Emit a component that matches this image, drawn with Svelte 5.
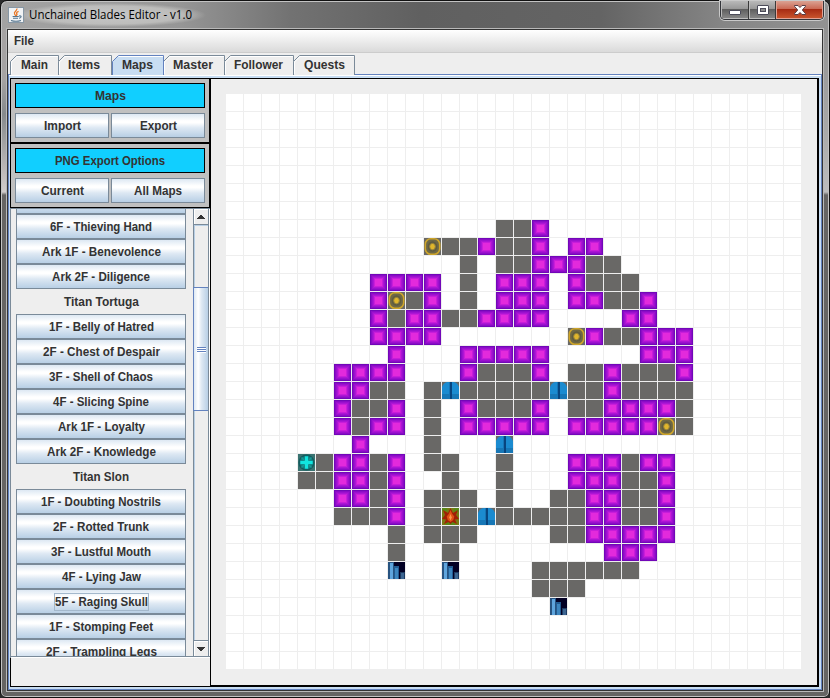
<script>
  const tabs = [
    { name: 'Main', w: 49, tw: 27, pad: 11 },
    { name: 'Items', w: 54, tw: 32, pad: 10 },
    { name: 'Maps', w: 53, tw: 31, pad: 11 },
    { name: 'Master', w: 62, tw: 40, pad: 10 },
    { name: 'Follower', w: 70, tw: 49, pad: 10 },
    { name: 'Quests', w: 62, tw: 41, pad: 11 },
  ];
  const active = 'Maps';

  const floors = [
    { name: '' },
    { name: '6F - Thieving Hand', tw: 102 },
    { name: 'Ark 1F - Benevolence', tw: 119 },
    { name: 'Ark 2F - Diligence', tw: 98 },
    { name: 'Titan Tortuga', tw: 75, label: true },
    { name: '1F - Belly of Hatred', tw: 105 },
    { name: '2F - Chest of Despair', tw: 117 },
    { name: '3F - Shell of Chaos', tw: 104 },
    { name: '4F - Slicing Spine', tw: 96 },
    { name: 'Ark 1F - Loyalty', tw: 87 },
    { name: 'Ark 2F - Knowledge', tw: 109 },
    { name: 'Titan Slon', tw: 56, label: true },
    { name: '1F - Doubting Nostrils', tw: 120 },
    { name: '2F - Rotted Trunk', tw: 96 },
    { name: '3F - Lustful Mouth', tw: 100 },
    { name: '4F - Lying Jaw', tw: 79 },
    { name: '5F - Raging Skull', tw: 93, focus: true },
    { name: '1F - Stomping Feet', tw: 104 },
    { name: '2F - Trampling Legs', tw: 111 },
  ];

  const left = 4;
  const top = 7;
  const rows = [
    '...........GGP........',
    '.......OGGPGGP.PP.....',
    '.........G.GGPPPGG....',
    '....PPPP.G.PPP.PGGG...',
    '....POGP.G.PPP.PPGGP..',
    '....PGPPGGPPPP....PP..',
    '....PPPP.......OPGGPPP',
    '.....P...PPPPP.....PPP',
    '..PPPP...PGGGP.GGPGGGP',
    '..PPGG.GDGGGGGDGGPGGGG',
    '..PGGP.G.PGGGP.GGPPPPG',
    '..PGPP.G.PPPPP.PPPPPOG',
    '...P...G...D..........',
    'CGPPGP.GG..G...PPPGPP.',
    'GGPPGP..G..G...PPPGGP.',
    '..PPGP.GGG.G..GGPPGGP.',
    '..GGGP.GFGDGGGGGPPGGP.',
    '.....G.GGG....GGPPPPP.',
    '.....G..G........PPP..',
    '.....S..S....GGGGGG...',
    '.............GGG......',
    '..............S.......',
  ];
  const cells = [];
  for (let r = 0; r < 32; r++) {
    for (let c = 0; c < 32; c++) {
      cells.push(rows[r - top]?.[c - left] ?? '.');
    }
  }
</script>

{#snippet fit(text, w)}
  <svg class="fit" width={w} height="16"><text x="0" y="12" textLength={w} lengthAdjust="spacingAndGlyphs">{text}</text></svg>
{/snippet}

<div class="window">
  <header>
    <div class="caption">
      <svg class="java" width="16" height="16" viewBox="0 0 16 16">
        <rect x=".5" y=".5" width="15" height="15" fill="#f1f3f5" stroke="#8797a5" />
        <path d="M8.9 1.5C9.4 4 5.3 4.7 6.6 7l1.2 2M10.6 4.3C8.7 5 8 5.9 9 7.2L8.3 9" fill="none" stroke="#e87524" stroke-width="1.3" />
        <path d="M4.6 9.5h6.2M5 11.2h5M3 13.4c3 1 7 1 10 0M11 9c3-.7 2.6 1.8 0 2.2" fill="none" stroke="#55758f" stroke-width="1.1" />
      </svg>
      <span class="title">{@render fit('Unchained Blades Editor - v1.0', 163)}</span>
    </div>
    <div class="controls">
      <div class="ctl min"><svg width="12" height="10"><rect x=".5" y="5.500" width="11" height="4" rx=".5" fill="#fff" stroke="#4b4b59" /></svg></div>
      <div class="ctl max"><svg width="12" height="10"><rect x=".5" y=".5" width="11" height="9" rx=".5" fill="#fff" stroke="#4b4b59" /><rect x="3.500" y="3.500" width="5" height="3" fill="#8d8d8d" stroke="#4b4b59" /></svg></div>
      <div class="ctl close"><svg width="12" height="10"><path d="M.5 .5H4l2 2 2-2h3.500v.8L8.300 5l3.200 3.700v.8H8l-2-2-2 2H.5v-.8L3.700 5 .5 1.300z" fill="#fff" stroke="#573c44" /></svg></div>
    </div>
  </header>

  <main>
    <nav class="menu">{@render fit('File', 20)}</nav>
    <div class="tabs">
      {#each tabs as t}
        <div class="tab" class:on={t.name === active} style:width="{t.w}px" style:padding-left="{t.pad}px">
          <svg class="edge" width={t.w} height="20">
            <path
              d={t.name === active ? `M1.500 20V6.500L7.500 .5H${t.w - 0.5}V20` : `M.5 20V6.500L6.500 .5H${t.w - 0.5}V20`}
              class="shape"
            />
            {#if t.name === active}
              <path d="M7.500 1.500H{t.w - 1}" class="shine" />
            {:else}
              <path d="M1.500 19V7L7 1.500H{t.w - 1}" class="shine" />
            {/if}
          </svg>
          <span>{@render fit(t.name, t.tw)}</span>
        </div>
      {/each}
    </div>

    <div class="page">
      <aside>
        <section class="panel">
          <div class="head">{@render fit('Maps', 31)}</div>
          <div class="pair">
            <div class="btn">{@render fit('Import', 37)}</div>
            <div class="btn">{@render fit('Export', 37)}</div>
          </div>
        </section>
        <section class="panel">
          <div class="head">{@render fit('PNG Export Options', 110)}</div>
          <div class="pair">
            <div class="btn">{@render fit('Current', 43)}</div>
            <div class="btn">{@render fit('All Maps', 48)}</div>
          </div>
        </section>
        <div class="scroll">
          <div class="view">
            <div class="list">
              {#each floors as f}
                <div class={f.label ? 'label' : 'btn'}>
                  {#if f.name}<span class:focus={f.focus}>{@render fit(f.name, f.tw)}</span>{/if}
                </div>
              {/each}
            </div>
          </div>
          <div class="bar">
            <div class="arrow up"><svg width="8" height="4" shape-rendering="crispEdges"><path d="M3 0h2v1h1v1h1v1h1v1H0V3h1V2h1V1h1z" fill="#333" /></svg></div>
            <div class="track"><div class="thumb"><i></i><i></i><i></i></div></div>
            <div class="arrow down"><svg width="8" height="4" shape-rendering="crispEdges"><path d="M0 0h8v1H7v1H6v1H5v1H3V3H2V2H1V1H0z" fill="#333" /></svg></div>
          </div>
        </div>
        <div class="rest"></div>
      </aside>
      <div class="canvas">
        <div class="grid">
          {#each cells as k}
            <div class="cell {k === '.' ? '' : k}">
              {#if k === 'O'}
                <svg viewBox="0 0 17 17"><rect width="17" height="17" fill="#696866" /><rect x="1.300" y=".8" width="14.400" height="15.400" rx="5.500" fill="#6e6845" stroke="#cfa62a" stroke-width="1.600" /><ellipse cx="8.500" cy="8.500" rx="4.800" ry="5.300" fill="#5f5b40" /><ellipse cx="8.500" cy="8.600" rx="2.800" ry="3.200" fill="#e0b62c" stroke="#9a8438" /></svg>
              {:else if k === 'D'}
                <svg viewBox="0 0 17 17"><rect width="17" height="17" fill="#696866" /><path d="M0 17V5Q2 0 6 0h5q4 0 6 5v12z" fill="#1b8bd0" /><path d="M0 12h17v5H0z" fill="#1777b6" /><path d="M8 0h2v17H8z" fill="#07457f" /><path d="M7 0h1v17H7z" fill="#1775b5" /></svg>
              {:else if k === 'S'}
                <svg viewBox="0 0 17 17"><path fill="#020024" d="M0 0h17v17H0z" /><path fill="#275380" d="M0 0h6v17H0z" /><path fill="#5fa5dd" d="M2 1h3v16H2z" /><path fill="#225b91" d="M6 4h5v13H6z" /><path fill="#3d86bf" d="M7 6h3v11H7z" /><path fill="#1c3961" d="M12 10h5v7h-5z" /><path fill="#3c6591" d="M13 11h3v6h-3z" /></svg>
              {:else if k === 'C'}
                <svg viewBox="0 0 17 17"><path fill="#397371" d="M0 0h17v17H0z" /><circle cx="8.500" cy="8.500" r="7.300" fill="#13807f" stroke="#145c5f" stroke-width="1.500" /><path d="M3.500 3.500l10 10M13.500 3.500l-10 10" stroke="#1a9894" stroke-width="1.500" /><path d="M6.500 2h4v4.500H15v4h-4.500V15h-4v-4.500H2v-4h4.500z" fill="#12e4df" stroke="#0e6568" stroke-width=".5" /></svg>
              {:else if k === 'F'}
                <svg viewBox="0 0 17 17"><path fill="#777a12" d="M0 0h17v17H0z" /><path fill="#588716" d="M0 0h5v3H0zM12 0h5v4h-5zM4 14h9v3H4z" /><path d="M8.500 0l2.500 5 5-3-2 5 3 4-4 .5 2 4.500-4.500-2-2 2-2-2-4.500 2 2-4.500-4-.5 3-4-2-5 5 3z" fill="#a02005" /><path d="M8.500 2l1.800 4 2 2.500-1 3.500-2.800 2-2.800-2-1-3.500 2-2.500z" fill="#df5014" /><path d="M8.500 6l1.300 3.500-1.300 3L7.200 9.500z" fill="#f9984a" /></svg>
              {/if}
            </div>
          {/each}
        </div>
      </div>
    </div>
  </main>
</div>

<style>
  :global(body) { margin: 0; background: #2b2b2b; }
  * { box-sizing: border-box; }
  .window {
    width: 830px; height: 698px; padding: 0 6px 5px 5px;
    display: flex; flex-direction: column;
    border: 1px solid #111; border-radius: 7px 7px 6px 6px;
    box-shadow: inset 0 0 0 1px #c3c3c3;
    background:
      linear-gradient(#a5a3a3 0, #a5a3a3 50px, #858a8d 85px, #bdb9b8 142px, #d0cccb 163px, #656463 166px, #656463) 0 28px / 8px 100% no-repeat,
      linear-gradient(#929292 0, #a8a8a8 100px, #bcbcbc 163px, #656463 166px, #656463) 100% 28px / 8px 100% no-repeat,
      linear-gradient(#656463, #656463) 0 100% / 100% 8px no-repeat,
      linear-gradient(90deg, #a3a3a3 0, #969696 180px, #727272 290px, #606060 420px, #646464 600px, #858585 720px, #929292);
    font: bold 12px "Liberation Sans", Arial, sans-serif; color: #333;
  }
  .fit { display: block; overflow: visible; }
  .fit text { fill: currentColor; }
  header { height: 27px; display: flex; justify-content: space-between; flex: none; }
  .caption { display: flex; align-items: center; gap: 5px; padding: 1px 0 0 2px; }
  .title {
    font: 12px "Open Sans", "Noto Sans", sans-serif; color: #000;
    background: radial-gradient(ellipse closest-side, #d2d2d2cc 0, #cccccab0 75%, #bbb0 100%);
    padding: 4px 14px; margin: 0 -14px;
  }
  .java { position: relative; z-index: 1; }
  .controls {
    display: flex; height: 19px; width: 104px; margin-right: -1px;
    border: 1px solid #33353a; border-top: 0; border-radius: 0 0 5px 5px;
    box-shadow: 0 0 0 1px #c9c9c9; overflow: hidden;
  }
  .ctl {
    display: flex; align-items: center; justify-content: center; width: 28px;
    border: 1px solid #bcbcbc; border-top: 0;
    background: linear-gradient(#b9b9b9 0, #999 45%, #5e5e5e 48%, #868686 100%);
  }
  .max { width: 27px; border-right: 0; }
  .max, .close { box-shadow: -1px 0 #3a3a3a; }
  .close {
    flex: 1; border-color: #e2a294;
    background: linear-gradient(#dba293 0, #cb6a55 45%, #a62a13 48%, #c8532c 100%);
  }
  main {
    flex: 1; display: flex; flex-direction: column; background: #eee;
    border: 1px solid #333; box-shadow: 0 0 0 1px #b9b9b9; margin: 1px 0 1px 1px;
    min-height: 0;
  }
  .menu {
    height: 23px; padding: 3px 0 0 6px; flex: none;
    background: linear-gradient(#fff, #dadada); border-bottom: 1px solid #ccc;
  }
  .tabs { display: flex; height: 21px; padding: 2px 0 0 2px; flex: none; }
  .tab { position: relative; height: 20px; flex: none; padding-top: 2px; }
  .tab + .tab { margin-left: -1px; }
  .edge { position: absolute; left: 0; top: 0; }
  .tab span { position: relative; }
  .shape { fill: #eee; stroke: #7a8a99; }
  .shine { fill: none; stroke: #fff; }
  .on .shape { fill: #c8ddf2; stroke: #6382bf; }
  .on { z-index: 1; }
  .page {
    flex: 1; min-height: 0; display: flex; padding: 3px 2px 2px 1px;
    border: 1px solid #6382bf; background: #c8ddf2; box-shadow: inset 0 1px #fff;
  }
  aside { width: 200px; display: flex; flex-direction: column; flex: none; }
  .panel {
    height: 65px; flex: none; background: #c0c0c0; border: 1px solid #000; padding: 4px;
    display: flex; flex-direction: column; gap: 5px;
  }
  .head {
    height: 25px; border: 1px solid #000; background: #11cfff;
    display: flex; align-items: center; justify-content: center;
  }
  .pair { display: flex; gap: 2px; }
  .pair .btn { flex: 1; }
  .btn, .label { height: 25px; flex: none; display: flex; align-items: center; justify-content: center; }
  .btn { border: 1px solid #7a8a99; background: linear-gradient(#dde8f3 0, #fff 30%, #fff 38%, #dde8f3 60%, #b8cfe5 100%); }
  .focus { outline: 1px solid #a3b8cc; }
  .scroll {
    height: 450px; flex: none; display: flex; background: #eee;
    border: 1px solid #7a8a99; border-right: 0; border-bottom: 0;
    box-shadow: inset 0 -1px #fff, inset 0 -2px #7a8a99, inset -1px 0 #fff;
  }
  .view { width: 182px; height: 447px; overflow: hidden; flex: none; }
  .list { width: 170px; margin: -20px 0 0 5px; display: flex; flex-direction: column; }
  .bar {
    width: 16px; height: 448px; display: flex; flex-direction: column; background: #eee;
    border: 1px solid #7a8a99; border-top: 0;
  }
  .arrow { height: 16px; flex: none; display: flex; align-items: center; justify-content: center; box-shadow: inset 1px 1px #fff; }
  .up { border-bottom: 1px solid #7a8a99; }
  .down { border-top: 1px solid #7a8a99; }
  .track { flex: 1; box-shadow: inset 1px 1px #b8cfe5; padding-top: 62px; }
  .thumb {
    height: 124px; margin-left: -1px; border: 1px solid #6382bf; border-right: 0;
    background: linear-gradient(90deg, #dde8f3 0, #fff 30%, #dde8f3 55%, #b8cfe5 100%);
    display: flex; flex-direction: column; align-items: center; justify-content: center; padding: 2px 0 0 1px;
  }
  .thumb i { width: 9px; height: 2px; background: #6382bf; border-bottom: 1px solid #fff; }
  .rest { flex: 1; background: #eee; border: 1px solid #000; border-width: 0 0 1px 1px; }
  .canvas { flex: 1; background: #eee; border: 1px solid #000; border-width: 1px 2px 2px 1px; padding: 15px 0 0 15px; }
  .grid { display: grid; grid-template-columns: repeat(32, 17px); grid-auto-rows: 17px; gap: 1px; }
  .cell { background: #fff; }
  .cell svg { display: block; width: 17px; height: 17px; }
  .G { background: #696866; }
  .P {
    background: #e32adc;
    box-shadow: inset 0 0 0 1px #7207b8, inset 0 0 0 2px #8a0cc6, inset 0 0 0 3px #9c10cf, inset 0 0 0 4px #ad15d4, inset 0 0 0 5px #c91dda;
  }
</style>
